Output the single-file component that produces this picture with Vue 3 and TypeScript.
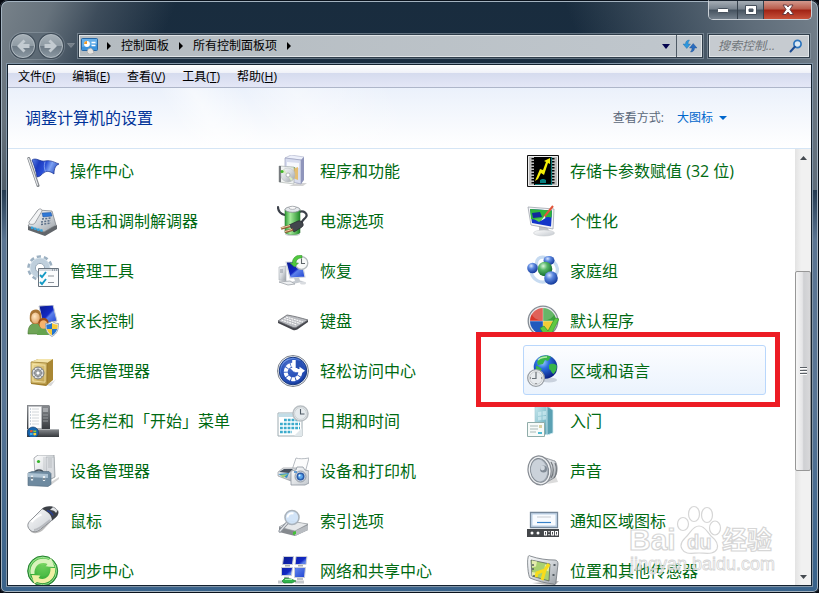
<script setup lang="ts">
import { ref } from 'vue'

interface PanelItem {
  icon: string
  label: string
  marked?: boolean
}

const menus = [
  { text: '文件', key: 'F' },
  { text: '编辑', key: 'E' },
  { text: '查看', key: 'V' },
  { text: '工具', key: 'T' },
  { text: '帮助', key: 'H' },
]

const crumbs = ['控制面板', '所有控制面板项']

const items: PanelItem[] = [
  { icon: 'flag', label: '操作中心' },
  { icon: 'programs', label: '程序和功能' },
  { icon: 'card', label: '存储卡参数赋值 (32 位)' },
  { icon: 'phone', label: '电话和调制解调器' },
  { icon: 'power', label: '电源选项' },
  { icon: 'personal', label: '个性化' },
  { icon: 'tools', label: '管理工具' },
  { icon: 'recovery', label: '恢复' },
  { icon: 'homegroup', label: '家庭组' },
  { icon: 'parental', label: '家长控制' },
  { icon: 'keyboard', label: '键盘' },
  { icon: 'defaults', label: '默认程序' },
  { icon: 'safe', label: '凭据管理器' },
  { icon: 'access', label: '轻松访问中心' },
  { icon: 'region', label: '区域和语言', marked: true },
  { icon: 'taskbar', label: '任务栏和「开始」菜单' },
  { icon: 'calendar', label: '日期和时间' },
  { icon: 'start', label: '入门' },
  { icon: 'device', label: '设备管理器' },
  { icon: 'printer', label: '设备和打印机' },
  { icon: 'speaker', label: '声音' },
  { icon: 'mouse', label: '鼠标' },
  { icon: 'index', label: '索引选项' },
  { icon: 'notify', label: '通知区域图标' },
  { icon: 'sync', label: '同步中心' },
  { icon: 'network', label: '网络和共享中心' },
  { icon: 'gps', label: '位置和其他传感器' },
]

const view = ref('large')
const query = ref('')
</script>

<template>
  <svg class="sprite" aria-hidden="true">
    <defs>
      <linearGradient id="g-blue" x1="0" y1="0" x2="1" y2="1">
        <stop offset="0" stop-color="#0a1a8c" /><stop offset=".5" stop-color="#1228c4" /><stop offset=".58" stop-color="#5c80ea" /><stop offset="1" stop-color="#1a3fd0" />
      </linearGradient>
      <linearGradient id="g-flag" x1="0" y1="0" x2="1" y2=".3">
        <stop offset="0" stop-color="#5f86e6" /><stop offset=".3" stop-color="#1c3bc0" /><stop offset=".55" stop-color="#2a4fd6" /><stop offset=".75" stop-color="#7ea2f2" /><stop offset="1" stop-color="#3358c8" />
      </linearGradient>
      <linearGradient id="g-steel" x1="0" y1="0" x2="1" y2="1">
        <stop offset="0" stop-color="#fafbfc" /><stop offset=".5" stop-color="#d4d8dc" /><stop offset="1" stop-color="#989ea4" />
      </linearGradient>
      <linearGradient id="g-light" x1="0" y1="0" x2="1" y2="1">
        <stop offset="0" stop-color="#ffffff" /><stop offset="1" stop-color="#c3c8ce" />
      </linearGradient>
      <linearGradient id="g-dark" x1="0" y1="0" x2="0" y2="1">
        <stop offset="0" stop-color="#8a8d91" /><stop offset="1" stop-color="#35383c" />
      </linearGradient>
      <linearGradient id="g-green" x1="0" y1="0" x2="1" y2="0">
        <stop offset="0" stop-color="#2f9e35" /><stop offset=".35" stop-color="#a6eb9b" /><stop offset="1" stop-color="#1f8a28" />
      </linearGradient>
      <linearGradient id="g-gold" x1="0" y1="0" x2="1" y2="1">
        <stop offset="0" stop-color="#f0dc94" /><stop offset="1" stop-color="#b99a48" />
      </linearGradient>
      <linearGradient id="g-teal" x1="0" y1="0" x2="1" y2="1">
        <stop offset="0" stop-color="#c9e9ef" /><stop offset="1" stop-color="#4c9caf" />
      </linearGradient>
      <radialGradient id="g-ball" cx=".38" cy=".3" r=".7">
        <stop offset="0" stop-color="#d8e6ff" /><stop offset=".4" stop-color="#5a86de" /><stop offset="1" stop-color="#143a9c" />
      </radialGradient>
      <radialGradient id="g-gball" cx=".38" cy=".3" r=".7">
        <stop offset="0" stop-color="#dcf7dc" /><stop offset=".4" stop-color="#55b566" /><stop offset="1" stop-color="#126b2c" />
      </radialGradient>
      <radialGradient id="g-globe" cx=".38" cy=".3" r=".75">
        <stop offset="0" stop-color="#9fd0ff" /><stop offset=".35" stop-color="#2b6fe0" /><stop offset="1" stop-color="#06187a" />
      </radialGradient>
      <radialGradient id="g-sync" cx=".5" cy=".3" r=".75">
        <stop offset="0" stop-color="#7ed966" /><stop offset=".6" stop-color="#3bb03a" /><stop offset="1" stop-color="#178225" />
      </radialGradient>
      <radialGradient id="g-face" cx=".4" cy=".35" r=".7">
        <stop offset="0" stop-color="#ffe8c4" /><stop offset="1" stop-color="#dfa063" />
      </radialGradient>
    </defs>

    <symbol id="i-flag" viewBox="0 0 32 32">
      <path d="M1.800 3.500 11 30.500" stroke="#83878c" stroke-width="3" stroke-linecap="round" />
      <path d="M1.600 3.500 10.600 30" stroke="#e5e7ea" stroke-width="1.200" stroke-linecap="round" />
      <path d="M5 5c4-3 8 2 13 1 4-1 7 0 14 3-3 1-5 4-5 10-4-3-7-3-9-2-3 1-4 5-8 5C9 16 7 10 5 5Z" fill="url(#g-flag)" stroke="#1a318f" stroke-width=".7" />
      <path d="M18 6.500c-1 4-1 7 .5 10" stroke="#9bb8f5" stroke-width="1" fill="none" opacity=".7" />
    </symbol>

    <symbol id="i-phone" viewBox="0 0 32 32">
      <path d="m1 20 15 5 14-5v4l-12 7-17-6Z" fill="#62666b" />
      <path d="m11 5 14 1 4 14-12 7L1 21Z" fill="url(#g-steel)" stroke="#787d83" stroke-width=".7" />
      <path d="m15 8 9-.500 1 3.500-9 1Z" fill="#2e78d6" stroke="#1d4f9c" stroke-width=".5" />
      <path d="m15 14 9-1m-10 4 10-1.500M14 19.500l10-1.500" stroke="#5c6f88" stroke-width="1.500" stroke-dasharray="2 1.300" />
      <path d="M11 5c2-2 4-1 4 1L8 18c-1 2-7 2-6-1Z" fill="#f3f4f5" stroke="#8b9096" stroke-width=".8" />
      <path d="m4 22.500 12 3.500" stroke="#38a4dc" stroke-width="2.400" stroke-dasharray="2.500 .7" />
    </symbol>

    <symbol id="i-tools" viewBox="0 0 32 32">
      <circle cx="13" cy="13" r="10.800" fill="none" stroke="#9db1c2" stroke-width="4" stroke-dasharray="4 2.780" />
      <circle cx="13" cy="13" r="7.500" fill="none" stroke="#bfcfdc" stroke-width="5.500" />
      <circle cx="13" cy="13" r="4.600" fill="#fff" stroke="#7f95a8" stroke-width=".8" />
      <circle cx="13" cy="13" r="10" fill="none" stroke="#dce7ef" stroke-width=".8" />
      <path d="M11.500 13.500h20v18h-20z" fill="#fbfcfd" stroke="#68737e" />
      <path d="M12 14h19v2H12z" fill="#d3d9df" /><path d="M25 15h5" stroke="#687482" stroke-width="1" stroke-dasharray="1 1" />
      <path d="m13 20 2 2 4-5m-6 10 2 2 4-5" fill="none" stroke="#159ac4" stroke-width="1.900" />
      <path d="M21 21h6m-6 6.500h6" stroke="#8b939c" stroke-width="1.200" />
    </symbol>

    <symbol id="i-parental" viewBox="0 0 32 32">
      <path d="m12 1 14-1 4 16-14 3Z" fill="url(#g-blue)" stroke="#c5cad3" stroke-width="1" />
      <path d="M1 29c0-7 2-10 7-11 5 0 7 4 7 11Z" fill="#6fa457" stroke="#41752e" stroke-width=".6" />
      <path d="M3 16C2 8 4 4.500 9 4.500c5 .5 6 5 5 11.500l-3 3H6Z" fill="#a87434" />
      <ellipse cx="8.500" cy="13" rx="4.300" ry="5.500" fill="url(#g-face)" />
      <path d="M10 30c0-5 3-7 7-7 4 0 5 3 5 7Z" fill="#65a34f" />
      <circle cx="16.500" cy="18" r="5.200" fill="#9c4c16" />
      <ellipse cx="16.500" cy="19.500" rx="4" ry="4.300" fill="#f5b36c" />
      <path d="M25 16c2 2 4 2.500 6.500 2.500 0 6-1 10-6.500 13-5.500-3-6.500-7-6.500-13 2.500 0 4.500-.5 6.500-2.500Z" fill="#f3f5f8" stroke="#818c9b" stroke-width=".7" />
      <path d="M25 18v6h-5.200c-.4-1.500-.5-3-.5-4.500 2 0 4-.5 5.700-1.500ZM25 24h5.200c-1 3-2.500 5-5.200 6.300Z" fill="#2374cf" />
      <path d="M25 18v6h5.200c.4-1.500.5-3 .5-4.500-2 0-4-.5-5.700-1.500ZM25 24h-5.200c1 3 2.500 5 5.200 6.300Z" fill="#f6ca3c" />
    </symbol>

    <symbol id="i-safe" viewBox="0 0 32 32">
      <path d="m19 30 8-4 2-2-5 7Z" fill="#bbb" opacity=".6" />
      <path d="m4 7 7-3h15v21l-7 6-15-2Z" fill="#a98734" />
      <path d="m4 7 7-3h15l-6 4Z" fill="#f3e4ab" />
      <path d="m4 7 16 1v22L4 28Z" fill="url(#g-gold)" stroke="#8e6f24" stroke-width=".6" />
      <path d="m6 9.500 12 .7v17L6 26Z" fill="none" stroke="#f6e7b0" stroke-width=".8" />
      <circle cx="11" cy="18" r="6" fill="#e1e4e6" stroke="#7a7b7a" stroke-width="1" />
      <circle cx="11" cy="18" r="3.500" fill="#b9bdc1" stroke="#686c70" stroke-width=".8" />
      <path d="M11 12v12M5 18h12M7 14l8 8m0-8-8 8" stroke="#888c90" stroke-width=".8" /><circle cx="11" cy="18" r="1.500" fill="#fff" />
    </symbol>

    <symbol id="i-taskbar" viewBox="0 0 32 32">
      <path d="M0 0h22l1 1v24H0Z" fill="url(#g-dark)" />
      <path d="M1.500 1.500h13v22h-13z" fill="#fdfdfd" stroke="#bfc3c7" stroke-width=".6" />
      <path d="M5 4h7m-7 3h7m-7 3h7m-7 3h7m-7 3h7m-7 3h7" stroke="#cdd1d5" stroke-width=".9" />
      <path d="M3 4h1m-1 3h1m-1 3h1m-1 3h1m-1 3h1m-1 3h1" stroke="#94a5b8" stroke-width="1" />
      <path d="M16 3h5v4h-5z" fill="#b0b3b7" opacity=".8" /><path d="M16 10h5m-5 3h5m-5 3h5" stroke="#a5a8ac" stroke-width=".8" />
      <path d="M0 24h32v8H0z" fill="url(#g-dark)" /><path d="M0 24.500h32" stroke="#aeb1b4" />
      <circle cx="6" cy="27.500" r="5.500" fill="#1766ae" stroke="#103b6c" stroke-width=".7" />
      <path d="M3 25.500c1-.7 2-.7 2.600-.2v2H3Z" fill="#ed5328" /><path d="M6.400 25.300c1 .5 2 .4 2.800 0v2H6.400Z" fill="#8bd136" /><path d="M3 28h2.600v2.200C5 29.800 4 29.800 3 30.200Z" fill="#3cb0ed" /><path d="M6.400 28h2.800v2c-1 .4-2 .6-2.800.1Z" fill="#fbd03c" />
    </symbol>

    <symbol id="i-device" viewBox="0 0 32 32">
      <path d="m24 27 8-5v2l-8 6Z" fill="#aaa" opacity=".5" />
      <path d="m7 3 4-3h16l1 22-8 4-12-5Z" fill="url(#g-light)" stroke="#8a8f95" stroke-width=".7" />
      <path d="M19 2h8l.5 20-8 4Z" fill="#d9dce0" stroke="#9ba0a6" stroke-width=".5" /><path d="M21 4h4m-4 2h4m-4 2h4m-4 2h4m-4 2h4" stroke="#b2b6bb" stroke-width=".8" />
      <circle cx="11.500" cy="6.500" r="1.600" fill="#36b52b" /><path d="M17 2v21" stroke="#b9bdc2" stroke-width=".7" />
      <path d="M8 18c0-4 8-4 8 0" fill="none" stroke="#424e59" stroke-width="1.600" />
      <path d="m1 18 4-1.500h17l2 2v11l-3 2-20-1Z" fill="#6e8aa0" stroke="#4e677b" stroke-width=".6" />
      <path d="m1 18 20 1v4L1 22Z" fill="#abc1d2" /><path d="M5 20.500v5M17 21v5" stroke="#e9eff4" stroke-width="2.200" /><path d="M5 22v2m12-1v2" stroke="#3d4a55" stroke-width="1.200" />
    </symbol>

    <symbol id="i-mouse" viewBox="0 0 32 32">
      <path d="M2 24c2 6 11 5 15 0l14-15-6 4Z" fill="#777" opacity=".5" />
      <path d="M15 4c4-3 10-3 13-1s4 6 1 9L15 23c-4 4-9 5-12 2-4-4-2-8 2-11Z" fill="url(#g-light)" stroke="#85888d" stroke-width=".9" />
      <path d="M15 4c3-2.500 7-3 11-2l-3 3c3 0 5 1 6 3l2-3c1 3 0 5-2 7l-4 3.500c0-5-4-9-10-11.500Z" fill="#3c4046" />
      <path d="M20 5.500c3 1 5 2 6 5" stroke="#2c4190" stroke-width="1.500" fill="none" />
      <path d="M4.500 17c3-3.500 7-6.500 10-7.500" stroke="#fff" stroke-width="2.200" fill="none" />
      <path d="M7 25c5 0 11-6 16-10" stroke="#a9adb2" stroke-width="2" fill="none" opacity=".7" />
    </symbol>

    <symbol id="i-sync" viewBox="0 0 32 32">
      <circle cx="15.700" cy="16" r="15" fill="url(#g-sync)" stroke="#288133" />
      <circle cx="15.700" cy="16" r="13.700" fill="none" stroke="#b8efae" stroke-width=".8" />
      <path d="M3.500 19C2 8 12 1 22 5l2-2 3.500 9-9-.5 2-2.500C13 6 7 11 7.500 19Z" fill="#d8f3bc" />
      <path d="M28 13c1.500 11-8.500 18-18.500 14l-2 2-3-9 9 .5-2 2.500C18 26 24 21 23.500 13Z" fill="#f0f0a4" />
      <ellipse cx="15.700" cy="15.500" rx="6.500" ry="6" fill="#54c24c" opacity=".4" />
    </symbol>

    <symbol id="i-programs" viewBox="0 0 32 32">
      <path d="M20 28h10l-4 3H12Z" fill="#aaa" opacity=".5" />
      <path d="m8 3 6-3 13 2-3 3Z" fill="#edf0fb" stroke="#a7acc6" stroke-width=".6" />
      <path d="m8 3 16 2v24L8 25Z" fill="#d8ddef" stroke="#9196b6" stroke-width=".6" /><path d="m24 5 3-3v23l-3 4Z" fill="#8f95bb" />
      <path d="m10 7 12 1v5l-12-2Z" fill="#f7f9fe" /><path d="m13 12 5 0v4Z" fill="#7bb45a" /><path d="m16 14 5-2v13l-5-2Z" fill="#e8b95a" opacity=".85" />
      <path d="m2 11 15 1v17L2 27Z" fill="#f0f3f1" stroke="#a3aaa8" stroke-width=".7" opacity=".85" /><path d="M2 11v16l2 .3V11Z" fill="#777b7f" />
      <circle cx="11" cy="20" r="7" fill="url(#g-steel)" stroke="#b3b9bb" stroke-width=".5" /><path d="m11 20-6-3 2-3ZM11 20l3 6 2-2Z" fill="#d9ecc4" />
      <circle cx="11" cy="20" r="2" fill="#fff" stroke="#9ca2a2" stroke-width=".7" /><circle cx="5" cy="16.500" r="1.600" fill="#42b72a" />
    </symbol>

    <symbol id="i-power" viewBox="0 0 32 32">
      <path d="M1 2c0 5 3 7 7 8M22 7c5-2 9 2 7 5s-5 3-5 8" fill="none" stroke="#3b4049" stroke-width="2.200" stroke-linecap="round" />
      <path d="M8 4.500v23c0 3 15 4 15 0v-23Z" fill="url(#g-green)" stroke="#307936" stroke-width=".6" />
      <ellipse cx="15.500" cy="4.500" rx="7.500" ry="2.800" fill="#e3e7eb" stroke="#84898f" stroke-width=".8" /><ellipse cx="15.500" cy="2.800" rx="3.500" ry="1.600" fill="#fafafa" stroke="#9ca1a6" stroke-width=".7" />
      <path d="M8 28c2 2.500 13 2.500 15 0v1.500c-2 2-13 2-15 0Z" fill="#cfd3d6" />
      <path d="m12 20 9-4c4-1 7 4 4 6l-8 5Z" fill="#42464d" stroke="#23262a" stroke-width=".7" />
      <path d="m4 23.500 9-2.500m-5 6 8-2.500" stroke="#94603a" stroke-width="2.800" /><path d="m4 23 9-2.500M8 26.500l7-2" stroke="#f0cda5" stroke-width="1" />
    </symbol>

    <symbol id="i-recovery" viewBox="0 0 32 32">
      <path d="m2 12 7-1v15l-7-1Z" fill="url(#g-steel)" stroke="#a6abb1" stroke-width=".6" /><path d="M3 15h3m-3 2h3" stroke="#8f959d" />
      <path d="m9 7 16 0 3 15-15 1Z" fill="url(#g-blue)" stroke="#d7dbe1" stroke-width="1.200" />
      <path d="m17 23 5-.5 1 3 4 1-9 2-4-1.500 4-1Z" fill="#c4c9cf" />
      <path d="m2 27 11-1 5 3-7 1Z" fill="#edeff1" stroke="#9ea3a9" stroke-width=".8" /><ellipse cx="26" cy="28" rx="3" ry="1.500" fill="#d9dce0" />
      <circle cx="24.500" cy="8" r="6.300" fill="#f7f9f8" stroke="#b3babc" stroke-width="1.300" /><path d="M24.500 3.500V8.500h3.500" fill="none" stroke="#5e6569" stroke-width="1.100" />
      <path d="M25 .5C20-1 15 3 15.500 8H13l4.500 4 4-4H19c0-3 2-5 6-5Z" fill="#51c93e" stroke="#2f872b" stroke-width=".5" />
    </symbol>

    <symbol id="i-keyboard" viewBox="0 0 32 32">
      <path d="M1 16v2l15 7c2 .5 4 0 5-1l10-7v-2Z" fill="#44454b" /><path d="m1 16 9-6c7 1 14 3 21 5l-11 7c-1 1-3 1-4 .5Z" fill="#b9bbc0" stroke="#65676c" stroke-width=".8" />
      <path d="m9 12 17 5M7 13.500l16 5M4.500 15l15 5" stroke="#f8f8f8" stroke-width="1.200" stroke-dasharray="2 .7" />
    </symbol>

    <symbol id="i-access" viewBox="0 0 32 32">
      <circle cx="16" cy="16" r="15.500" fill="#f7f8fa" stroke="#6d747f" stroke-width=".9" /><circle cx="16" cy="16" r="13.800" fill="url(#g-ball)" stroke="#173882" /><circle cx="16" cy="16" r="12" fill="#2149b4" opacity=".75" />
      <circle cx="16" cy="17" r="7.300" fill="none" stroke="#fff" stroke-width="4" stroke-dasharray="3.800 .800" /><path d="M17.200 6h8v8h-8z" fill="#2850b4" />
      <path d="M15.200 5h3.500v8h2.300l-4 4-4-4h2.200Z" fill="#fff" /><path d="M17.500 14h5v-2.300l5.500 4-5.500 4v-2.400h-5Z" fill="#fff" />
    </symbol>

    <symbol id="i-calendar" viewBox="0 0 32 32">
      <path d="M1 8h24v23H1z" fill="#fff" stroke="#9eacb2" /><path d="M1.500 8.500h23V12h-23z" fill="#c3dde7" />
      <path d="M7 15h16M3 19h20M3 23h20M3 27h12" stroke="#3cabcc" stroke-width="2.600" stroke-dasharray="2.800 1" />
      <path d="m25 31-8 0 8-8Z" fill="#e1e8eb" /><circle cx="23.500" cy="8.500" r="7.500" fill="#f5f7f8" stroke="#b9bfc3" stroke-width="1.600" />
      <circle cx="23.500" cy="8.500" r="6" fill="#e6ebee" stroke="#9aa3a9" stroke-width=".4" /><path d="M23.500 4v5h4" stroke="#4e5a64" stroke-width="1.100" fill="none" />
    </symbol>

    <symbol id="i-printer" viewBox="0 0 32 32">
      <path d="m16 12 3-9c3 1 7 1 13 0l-4 15H15Z" fill="#fcfcfc" stroke="#a5abb2" stroke-width=".8" />
      <path d="m1 17 5-4 14 0 1 11-7 2L1 21Z" fill="url(#g-steel)" stroke="#868b92" stroke-width=".6" /><path d="m2 17 5-3h9l-4 4Z" fill="#46505d" />
      <path d="m1 19 11-1-2 5Z" fill="#358ec6" /><path d="m3 20 8-1-5 4Z" fill="#a3ce7d" />
      <path d="m14 16 5-1 1-3h6l2 3 4 1v12l-4 2H14Z" fill="url(#g-light)" stroke="#8d959f" stroke-width=".8" />
      <circle cx="23.500" cy="21.500" r="5.500" fill="#d5dae0" stroke="#808a97" stroke-width=".8" /><circle cx="23.500" cy="21.500" r="4" fill="#2c5ca8" /><circle cx="23.500" cy="21.500" r="2.400" fill="#5ba7ee" /><circle cx="22.500" cy="20.500" r="1" fill="#e5f4ff" />
      <path d="M17 17h3" stroke="#3a82ca" stroke-width="1.500" />
    </symbol>

    <symbol id="i-index" viewBox="0 0 32 32">
      <path d="m2 22 11-6 18 3v6l-13 6-16-4Z" fill="#85898e" /><path d="m2 22 11-6 18 3-13 7Z" fill="#e6e8ea" stroke="#93989e" stroke-width=".6" /><path d="m18 26 13-6v5l-13 6Z" fill="#b8bcc1" /><path d="m16 27 3-1v3l-3 1Z" fill="#43c137" />
      <path d="m11 17-8 9" stroke="#8b919a" stroke-width="3.200" stroke-linecap="round" /><path d="m11 17-8 9" stroke="#e4e7ea" stroke-width="1.200" stroke-linecap="round" />
      <circle cx="15" cy="12.500" r="7" fill="#cfe3f8" opacity=".93" stroke="#a5aeb8" stroke-width="1.600" /><path d="M10.500 12.500c0-3 3-5 6-4" stroke="#fff" stroke-width="2" fill="none" />
    </symbol>

    <symbol id="i-network" viewBox="0 0 32 32">
      <path d="M6.500 1.500h10l-1 8h-10ZM19 1.500h11l-1 8H18ZM4.500 12.500h11l-1 8h-10ZM17.500 12.500h11l-1 10h-10Z" fill="url(#g-blue)" stroke="#ccd0d8" stroke-width="1" />
      <path d="M8 10.800h5m8 0h5M7 22.500h5m8 1.500h6" stroke="#a9aeb6" stroke-width="1.400" />
      <path d="M1 27h8m9 0h9" stroke="#c4c8cc" stroke-width="3" /><path d="m8 23 6 1 5 2-4 2H7l-2-2Z" fill="#30b34c" stroke="#147527" stroke-width=".6" /><path d="M8 24.500h7" stroke="#aaeeaa" stroke-width="1" />
    </symbol>

    <symbol id="i-card" viewBox="0 0 32 32">
      <path d="M.5.500h31v31H.5z" fill="#bdbdbd" stroke="#111" /><path d="M1.500 1.500h29v29h-29z" fill="none" stroke="#eee" stroke-width="1" /><path d="M7 2h18v28H7z" fill="#000" />
      <path d="M6 3v26M26 3v26" stroke="#000" stroke-width="3" stroke-dasharray="1.500 1.500" />
      <path d="M24.500 2v27.500H8" fill="none" stroke="#087878" stroke-width="1.200" /><path d="M13 28v-3l2-1h2l2 1v3Z" fill="#078080" />
      <path d="m23 3-6 3 2 1-3 8-3-1-5 12 3-2 3-6 3 2 4-12 2 1Z" fill="#f5ee08" />
    </symbol>

    <symbol id="i-personal" viewBox="0 0 32 32">
      <path d="m12 21 8 1 3 5-11-1Z" fill="#bec2c7" /><ellipse cx="17" cy="28" rx="10.500" ry="3" fill="url(#g-light)" stroke="#c0c4c9" stroke-width=".5" />
      <path d="m1 2 26 2-1 20L4 20Z" fill="#f4f5f7" stroke="#a0a5ad" stroke-width=".8" /><path d="m3 4 22 1.500-1 16L5 18Z" fill="#1236c8" />
      <path d="m3 4 22 1.500-.5 7C18 10 11 16 4 14Z" fill="#2fb43a" /><path d="m5 8 8-1 2 5-9 1Z" fill="#11289c" /><path d="M7 14c4 0 7-2 11-1l-6 4Z" fill="#56cc4a" />
      <path d="M26 1 17 12" stroke="#e1553a" stroke-width="2" /><path d="m17.500 11-3.500 5 4.500-3Z" fill="#f0f3f6" />
    </symbol>

    <symbol id="i-homegroup" viewBox="0 0 32 32">
      <path d="M20 3C12 0 8 5 10 12M26 6c5 5 6 10 2 15M4 17c2 8 9 12 17 9" fill="none" stroke="#bdd5ef" stroke-width="3.200" opacity=".85" />
      <ellipse cx="22" cy="5.500" rx="5.500" ry="4.500" fill="url(#g-ball)" /><circle cx="5.500" cy="13" r="5.300" fill="url(#g-ball)" />
      <circle cx="18" cy="14" r="7.300" fill="url(#g-gball)" /><circle cx="24" cy="23" r="6.800" fill="url(#g-ball)" />
    </symbol>

    <symbol id="i-defaults" viewBox="0 0 32 32">
      <circle cx="16" cy="16" r="14.800" fill="#e8ebee" stroke="#858c94" stroke-width="1.300" /><path d="M15.800 15.800V3A13 13 0 0 0 3 15.800Z" fill="#d8372b" /><path d="M16.200 15.800V3A13 13 0 0 1 29 15.800Z" fill="#3ba23e" /><path d="M15.800 16.200V29A13 13 0 0 1 3 16.200Z" fill="#2059bd" /><path d="M16.200 16.200V29A13 13 0 0 0 29 16.200Z" fill="#f1cc36" />
      <ellipse cx="16" cy="9" rx="11" ry="6.500" fill="#fff" opacity=".22" /><path d="m13 23 4-2 4 5 7-13 4 1-9 18-4 1Z" fill="#5fc941" stroke="#2d912d" stroke-width=".7" />
    </symbol>

    <symbol id="i-region" viewBox="0 0 32 32">
      <ellipse cx="22" cy="25" rx="8" ry="2.500" fill="#c9d1dd" /><circle cx="18.500" cy="12" r="11.800" fill="url(#g-globe)" />
      <path d="M13 2c4-2 8-2 11 0l-3 4-3-1-2 4-5 1-1-3ZM22 10c3-2 5-1 7.500 0 1 4-1 7-3 9-3-2-2-4-4.500-5ZM9 11c3 0 4 2 6 3l-3 4-3-2Z" fill="#37b54a" /><path d="M11 5c3-3 6-3 9-3" stroke="#d5f8c6" stroke-width="1.500" fill="none" opacity=".8" />
      <circle cx="9" cy="23" r="8.300" fill="#f6f7f8" stroke="#999fa5" stroke-width="1.300" /><circle cx="9" cy="23" r="6.400" fill="#e8ebee" stroke="#babfc4" stroke-width=".8" />
      <path d="M9 18v5.500H5" fill="none" stroke="#687078" stroke-width="1.200" /><path d="M9 17v1m0 10v1M3 23h1m10 0h1" stroke="#555" />
    </symbol>

    <symbol id="i-start" viewBox="0 0 32 32">
      <path d="m8 2 15-2v29l-12 1-3-3Z" fill="url(#g-teal)" stroke="#9cc8d2" stroke-width=".6" /><path d="m20 1 6 4v23l-6 2Z" fill="#5ba1b3" stroke="#d5eef4" stroke-width=".8" />
      <path d="m11 7 3.500-.5v4L11 11Zm4.500-.7L19 6v4l-3.500.5ZM11 12l3.500-.5V15l-3.500.5Zm4.500-.7L19 11v3.500l-3.500.5Z" fill="#dcf4f8" opacity=".6" />
      <path d="M.5 17.500h17v14H.5z" fill="#f7fbf9" stroke="#90aca9" /><path d="M3 21h8m-8 3h8m-8 3h6" stroke="#a9b9b8" /><path d="M12 20h3v3h-3z" fill="#d8d0a1" /><path d="M11 28h4" stroke="#39b4cf" stroke-width="1.800" />
    </symbol>

    <symbol id="i-speaker" viewBox="0 0 32 32">
      <path d="m20 29 11-2-3-8Z" fill="#ccc" opacity=".7" /><path d="M13 2c7 1 11 3 15 4 3 4 3 13-1 17L15 30Z" fill="url(#g-steel)" stroke="#80858b" stroke-width=".8" /><path d="M24 7c3 4 3 12 0 16M28 8c2 4 2 11-1 15" stroke="#72777d" stroke-width="1.200" fill="none" />
      <ellipse cx="12.500" cy="15.500" rx="11.500" ry="14.500" fill="#eef0f2" stroke="#878c93" stroke-width="1.200" transform="rotate(-9 12 15)" /><ellipse cx="12.500" cy="15.500" rx="9" ry="12" fill="#a5adb6" stroke="#828a93" transform="rotate(-9 12 15)" /><ellipse cx="12" cy="15.500" rx="8" ry="11" fill="#cbd2da" transform="rotate(-9 12 15)" />
      <circle cx="16.500" cy="14" r="3.500" fill="#808a95" /><circle cx="15.500" cy="13" r="2.400" fill="#d0d7de" />
    </symbol>

    <symbol id="i-notify" viewBox="0 0 32 32">
      <path d="M3.500 7.500h27v15h-27z" fill="#d7e5f4" stroke="#76889b" stroke-width="1.300" /><path d="M5 9h24v12H5z" fill="#f8fbff" stroke="#a4bfda" stroke-width=".7" /><path d="M10 12h14" stroke="#c6cbd1" /><path d="M10 17.500h14" stroke="#3681c9" stroke-width="1.200" />
      <path d="M0 24h32v8H0z" fill="#44474a" /><circle cx="5" cy="28" r="1.500" fill="#fff" /><circle cx="11" cy="28" r="1.500" fill="#fff" />
      <path d="M17.500 26.500h2v3.500h-2zM24.500 26.500h2v3.500h-2zM28.500 26.500h2v3.500h-2z" fill="none" stroke="#fff" stroke-width="1.100" /><path d="M22 26v1.200m0 1.800v1.200" stroke="#fff" stroke-width="1.200" />
    </symbol>

    <symbol id="i-gps" viewBox="0 0 32 32">
      <path d="m5 28 22 3 5-5Z" fill="#bbb" /><path d="M3 1c9 3 17 4 25 4 2 0 3 2 3 4l-2 18c0 2-1 3-3 2-8-1-16-3-23-6-2-2-3-17-2-20 0-2 1-3 2-2Z" fill="url(#g-steel)" stroke="#6f757b" stroke-width=".8" />
      <path d="m4 5 19 4-1 17L5 21Z" fill="#a9d070" stroke="#4c5351" stroke-width=".7" /><path d="m5 5.500 5 1-1 5-4 1Zm13 4 4.500 1-1 6-4-2ZM5 17l6 1-2 4-4-1.500Z" fill="#e4ecae" />
      <path d="m9 22 1-4 8-3 4-6m-4 6-3 10" stroke="#f7dc1c" stroke-width="3.200" fill="none" />
      <path d="M26.500 10h2m-3 10h2" stroke="#565e65" stroke-width="2" /><path d="M6 9v8M7 20v2" stroke="#586062" stroke-width="1.500" stroke-dasharray="2 2" />
    </symbol>
  </svg>

  <main class="window">
    <header class="titlebar">
      <div class="controls">
        <button class="ctl" type="button" aria-label="最小化">
          <svg width="14" height="8" viewBox="0 0 14 8"><rect x="1.500" y="2.500" width="11" height="4" rx="1" fill="#fff" stroke="#46505c" /></svg>
        </button>
        <button class="ctl mid" type="button" aria-label="最大化">
          <svg width="14" height="11" viewBox="0 0 14 11"><path fill-rule="evenodd" d="M1.500.5h11v9h-11ZM5 4v2.500h4V4Z" fill="#fff" stroke="#46505c" /></svg>
        </button>
        <button class="ctl close" type="button" aria-label="关闭">
          <svg width="14" height="12" viewBox="0 0 14 12"><path d="M2 1h3.500L7 3l1.500-2H12L9 5.500l3.500 5H9L7 8l-2 2.500H1.500l3.500-5Z" fill="#fff" stroke="#5c3138" stroke-width=".9" /></svg>
        </button>
      </div>
    </header>

    <nav class="navbar">
      <div class="history">
        <button class="round" type="button" aria-label="返回">
          <svg width="18" height="18" viewBox="0 0 18 18"><path d="M9.500 2.500 3 9l6.500 6.500 2-2L9 11h6.500V7H9l2.500-2.500Z" fill="#c3cbd1" /></svg>
        </button>
        <button class="round" type="button" aria-label="前进">
          <svg width="18" height="18" viewBox="0 0 18 18"><path d="M8.500 2.500 15 9l-6.500 6.500-2-2L9 11H2.500V7H9L6.500 4.500Z" fill="#c3cbd1" /></svg>
        </button>
      </div>
      <button class="recent" type="button" aria-label="最近的页面">
        <svg width="8" height="5" viewBox="0 0 8 5"><path d="M.5.500h7L4 4.500Z" fill="#737e88" stroke="#9aa3ab" stroke-width=".5" /></svg>
      </button>
      <div class="address">
        <svg class="place" width="18" height="16" viewBox="0 0 18 16">
          <rect x=".5" y=".5" width="16" height="12" rx="1" fill="#3b93dc" stroke="#2767a5" /><path d="M1 1h15v5L1 9Z" fill="#80c0f1" opacity=".6" />
          <circle cx="6" cy="6" r="2.900" fill="#fff" /><path d="M6 6V3.100A2.900 2.900 0 0 0 3.100 6Z" fill="#f09a29" /><path d="M10.500 4.500h4m-4 3h4" stroke="#fff" stroke-width="1.500" />
          <path d="m6 14 1-3 3-1 2 2 1 3-3 1H8Z" fill="#e8e4df" stroke="#9c9da0" stroke-width=".6" />
        </svg>
        <template v-for="crumb in crumbs" :key="crumb">
          <svg class="chev" width="4" height="8" viewBox="0 0 4 8"><path d="M0 0v8l4-4Z" /></svg>
          <a class="crumb" href="#">{{ crumb }}</a>
        </template>
        <svg class="chev" width="4" height="8" viewBox="0 0 4 8"><path d="M0 0v8l4-4Z" /></svg>
        <button class="drop" type="button" aria-label="以前的位置">
          <svg width="8" height="5" viewBox="0 0 8 5"><path d="M0 0h8L4 5Z" fill="#05054f" /></svg>
        </button>
        <button class="refresh" type="button" aria-label="刷新">
          <svg width="16" height="14" viewBox="0 0 16 14">
            <path d="M7.500 1C5 1 3.500 2.500 3.500 5H1l3.800 4.500L8.500 5H6c0-1.500.5-2.500 1.500-4Z" fill="#2f97dc" stroke="#1d6aa8" stroke-width=".4" />
            <path d="M8.500 13c2.500 0 4-1.500 4-4H15l-3.800-4.500L7.500 9H10c0 1.500-.5 2.500-1.500 4Z" fill="#2a6cbe" stroke="#1d4f93" stroke-width=".4" />
          </svg>
        </button>
      </div>
      <label class="search">
        <input v-model="query" type="text" placeholder="搜索控制..." aria-label="搜索控制面板" />
        <svg width="14" height="14" viewBox="0 0 14 14"><circle cx="8.500" cy="5" r="3.600" fill="#dbe9f5" stroke="#2d75bd" stroke-width="1.700" /><path d="M5.800 7.800 1.500 12.500" stroke="#1e4c91" stroke-width="2" stroke-linecap="round" /></svg>
      </label>
    </nav>

    <section class="panel">
      <div class="menubar">
        <button v-for="m in menus" :key="m.key" class="menu" type="button">{{ m.text }}(<u>{{ m.key }}</u>)</button>
      </div>

      <div class="heading">
        <h1>调整计算机的设置</h1>
        <div class="viewby">
          <label for="view">查看方式:</label>
          <select id="view" v-model="view">
            <option value="large">大图标</option>
          </select>
          <svg width="8" height="4" viewBox="0 0 8 4"><path d="M0 0h8L4 4Z" fill="#0066cc" /></svg>
        </div>
      </div>

      <div class="body">
        <div class="list">
          <a v-for="item in items" :key="item.icon" class="item" :class="{ marked: item.marked }" href="#">
            <svg class="icon" viewBox="0 0 32 32"><use :href="'#i-' + item.icon" /></svg>
            <span>{{ item.label }}</span>
          </a>
        </div>
        <div class="scrollbar">
          <button type="button" aria-label="向上滚动"><svg width="7" height="4" viewBox="0 0 7 4"><path d="M0 4h7L3.500 0Z" fill="#454a50" /></svg></button>
          <div class="before"></div>
          <div class="thumb"><i></i><i></i><i></i></div>
          <div class="after"></div>
          <button type="button" aria-label="向下滚动"><svg width="7" height="4" viewBox="0 0 7 4"><path d="M0 0h7L3.500 4Z" fill="#454a50" /></svg></button>
        </div>
      </div>
    </section>

    <svg class="watermark" width="153" height="72" viewBox="0 0 153 72">
      <g fill="#ffffff" fill-opacity=".7" stroke="#d6d6d6" stroke-width="1.200">
        <ellipse cx="57" cy="21" rx="5.500" ry="6.500" /><ellipse cx="68" cy="11" rx="5.500" ry="7.500" /><ellipse cx="81" cy="12" rx="5.500" ry="7.500" /><ellipse cx="89" cy="25" rx="5.500" ry="7" />
        <path d="M73 23c6 0 8 6 12 10 5 4 8 8 6 13-3 6-11 4-18 4s-14 2-17-4c-3-5 1-9 5-13 4-4 6-10 12-10Z" />
        <text x="3" y="47" class="mark-latin">Bai</text>
        <text x="61" y="46" class="mark-du">du</text>
        <text x="96" y="46" class="mark-cjk">经验</text>
        <text x="4" y="67" class="mark-url">jingyan.baidu.com</text>
      </g>
    </svg>
  </main>
</template>

<style>
body {
  background: #05080f;
}
</style>

<style scoped>
* {
  box-sizing: border-box;
}
.sprite {
  position: absolute;
  width: 0;
  height: 0;
}
button {
  border: 0;
  padding: 0;
  background: none;
  font: inherit;
  color: inherit;
}
a {
  color: inherit;
  text-decoration: none;
}
svg {
  display: block;
  flex: none;
}
.window {
  position: relative;
  display: flex;
  flex-direction: column;
  height: 100vh;
  padding: 0 7px 7px;
  overflow: hidden;
  border-radius: 8px 8px 6px 6px;
  font: 12px/16px "Open Sans", "Noto Sans CJK SC", sans-serif;
  color: #000;
  background:
    linear-gradient(112deg, #78828a 0, #66727c 50px, rgba(70, 84, 98, .8) 95px, rgba(26, 44, 62, 0) 165px) 0 0 / 100% 190px no-repeat,
    linear-gradient(250deg, #74808b 0, #5f6d7a 70px, rgba(26, 44, 62, 0) 240px) 0 0 / 100% 190px no-repeat,
    linear-gradient(#192c3e 0, #1a2f43 180px, #5b7592 240px, #587595 400px, #38628a 100%);
  box-shadow: inset 0 0 0 1px #0a121c, inset 0 0 0 2px #a3b2bf;
}
.titlebar {
  display: flex;
  flex: none;
  justify-content: flex-end;
  height: 33px;
}
.controls {
  display: flex;
  height: 20px;
  border: 1px solid #cbd1d7;
  border-top-color: #1b2530;
  border-radius: 0 0 5px 5px;
  overflow: hidden;
}
.ctl {
  display: flex;
  align-items: center;
  justify-content: center;
  width: 28px;
  background: linear-gradient(#a5adb5 0, #77828d 45%, #45525f 50%, #75818d 100%);
}
.mid {
  width: 27px;
  border-left: 1px solid #35404b;
  border-right: 1px solid #35404b;
}
.close {
  width: 47px;
  background: linear-gradient(#d3998d 0, #b95a49 45%, #a02214 50%, #c8513a 100%);
}
.navbar {
  display: flex;
  flex: none;
  align-items: center;
  height: 25px;
  margin-bottom: 6px;
  padding-right: 2px;
}
.history {
  display: flex;
  gap: 4px;
  margin-left: 3px;
  padding: 1px;
  border-radius: 14px;
  background: rgba(90, 103, 115, .6);
  box-shadow: 0 0 0 1px rgba(160, 172, 182, .4);
}
.round {
  display: flex;
  align-items: center;
  justify-content: center;
  width: 24px;
  height: 24px;
  border: 1px solid #b3bcc3;
  border-radius: 50%;
  background: linear-gradient(#a5afb6 0, #909ca5 48%, #6d7a85 52%, #8a97a1 100%);
  box-shadow: 0 0 0 1px #3e4b57;
}
.recent {
  display: flex;
  justify-content: center;
  width: 14px;
}
.address,
.search {
  display: flex;
  align-items: center;
  height: 24px;
  border: 1px solid #303e4b;
  background: linear-gradient(90deg, #b4bbc0, #c0c7cd);
  box-shadow: inset 0 0 0 1px #e1e5e8, 0 0 0 1px rgba(145, 158, 170, .6);
}
.address {
  flex: 1;
  min-width: 0;
  gap: 10px;
  padding-left: 2px;
}
.place {
  margin-right: -2px;
}
.crumb {
  white-space: nowrap;
}
.drop {
  margin-left: auto;
}
.drop svg {
  display: inline-block;
  vertical-align: middle;
}
.refresh {
  display: flex;
  align-items: center;
  justify-content: center;
  width: 26px;
  height: 22px;
  margin-left: -4px;
  border-left: 1px solid #4f5b66;
}
.search {
  width: 102px;
  margin-left: 5px;
  padding: 0 6px 0 9px;
  background: #c6cbd0;
}
.search input {
  flex: 1;
  min-width: 0;
  padding: 0;
  border: 0;
  outline: 0;
  background: none;
  font: italic 12px/16px "Open Sans", "Noto Sans CJK SC", sans-serif;
}
.search input::placeholder {
  color: #70757a;
  opacity: 1;
}
.panel {
  display: flex;
  flex: 1;
  flex-direction: column;
  min-height: 0;
  border: 1px solid #14222f;
  background: #fff;
  box-shadow: 0 0 0 1px #8396a8;
}
.menubar {
  display: flex;
  flex: none;
  gap: 1px;
  height: 23px;
  padding: 2px 0 0 2px;
  border-bottom: 1px solid #aeb6c9;
  background: linear-gradient(#fff 0, #eff1f8 8px, #d5dbee 8px, #e4e7f6 100%);
}
.menu {
  padding: 0 8px;
}
.heading {
  display: flex;
  flex: none;
  align-items: center;
  justify-content: space-between;
  height: 61px;
  padding: 0 84px 0 17px;
  border-bottom: 1px solid #d5e5f5;
  background:
    linear-gradient(60deg, transparent 22%, rgba(255, 255, 255, .5) 26%, transparent 32%, rgba(255, 255, 255, .4) 38%, transparent 50%),
    linear-gradient(#ebf1fb, #fff);
}
h1 {
  margin: 0;
  font-size: 16px;
  font-weight: 400;
  line-height: 24px;
  color: #003399;
}
.viewby {
  display: flex;
  align-items: center;
  color: #5a6779;
}
.viewby select {
  appearance: none;
  margin: 0 5px 0 13px;
  padding: 0;
  border: 0;
  background: none;
  font: inherit;
  color: #0066cc;
}
.body {
  display: flex;
  flex: 1;
  min-height: 0;
}
.list {
  display: grid;
  flex: 1;
  grid-template-columns: repeat(auto-fill, 243px);
  grid-auto-rows: 50px;
  gap: 0 7px;
  align-content: start;
  margin-top: -4px;
  padding-left: 15px;
  overflow: hidden;
}
.item {
  position: relative;
  display: flex;
  align-items: center;
  gap: 11px;
  padding: 2px 0 0 3px;
  border: 1px solid transparent;
  border-radius: 3px;
  font-size: 16px;
  line-height: 24px;
  color: #006a12;
  white-space: nowrap;
}
.icon {
  width: 32px;
  height: 32px;
}
.marked {
  border-color: #b9d7fc;
  background: linear-gradient(#fcfdff, #ebf3fd);
}
.marked::after {
  content: "";
  position: absolute;
  z-index: 1;
  inset: -14px -15px -13px -48px;
  border: 5px solid #ed1c24;
}
.scrollbar {
  display: flex;
  flex: none;
  flex-direction: column;
  width: 16px;
  background: linear-gradient(90deg, #e3e3e3, #f1f1f1 40%);
}
.scrollbar button {
  display: flex;
  align-items: center;
  justify-content: center;
  height: 17px;
}
.before {
  flex: 106;
}
.after {
  flex: 97;
}
.thumb {
  display: flex;
  flex: 199;
  flex-direction: column;
  align-items: center;
  justify-content: center;
  gap: 1px;
  border: 1px solid #979797;
  border-radius: 2px;
  background: linear-gradient(90deg, #f6f6f6 0, #e5e5e7 45%, #cfd0d3 55%, #d8d8da 100%);
}
.thumb i {
  width: 7px;
  height: 2px;
  border-bottom: 1px solid #fff;
  background: #5b6066;
}
.watermark {
  position: absolute;
  right: 40px;
  bottom: 18px;
  pointer-events: none;
}
.mark-latin {
  font: bold 30px "Liberation Sans", sans-serif;
}
.mark-du {
  font: bold 20px "Liberation Sans", sans-serif;
}
.mark-cjk {
  font: bold 25px "Noto Sans CJK SC", sans-serif;
}
.mark-url {
  font: 18px "Liberation Sans", sans-serif;
  stroke-width: .8px;
}
</style>
